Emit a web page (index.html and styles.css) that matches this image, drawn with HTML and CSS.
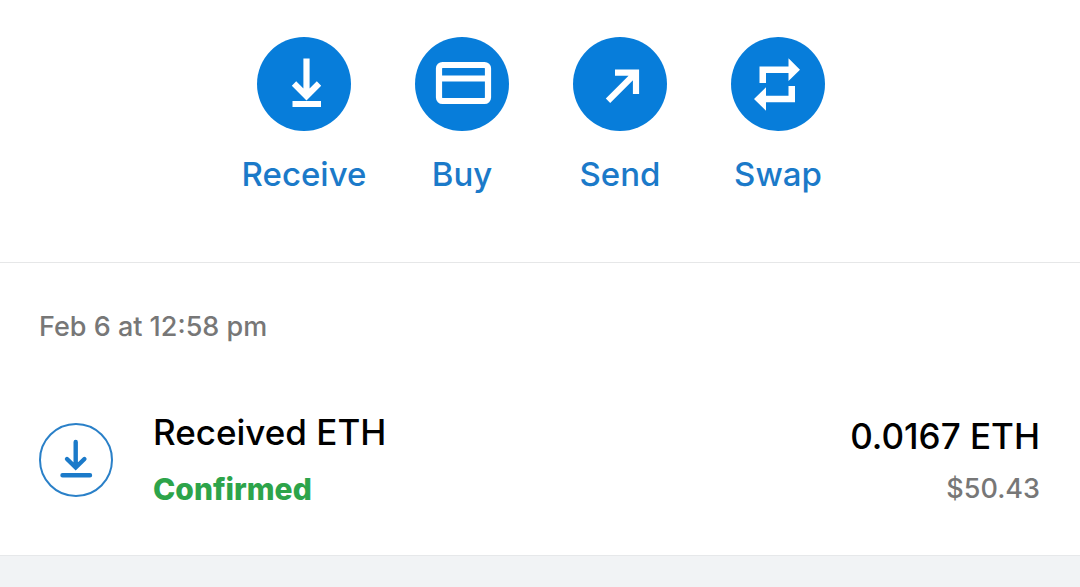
FILE: index.html
```html
<!DOCTYPE html>
<html lang="en">
<head>
    <meta charset="UTF-8">
    <meta name="viewport" content="width=device-width, initial-scale=1.0">
    <title>Wallet</title>
    <link rel="stylesheet" href="styles.css">
</head>
<body>
    <nav class="actions">
        <button type="button" class="action">
            <svg class="action-icon" viewBox="0 0 94 94" aria-hidden="true">
                <circle cx="47" cy="47" r="47" fill="#077dda"/>
                <path d="M49.5 21.5V59M37 46.5L49.5 59L62 46.5M35.5 67H64" fill="none" stroke="#fff" stroke-width="6.2"/>
            </svg>
            <span>Receive</span>
        </button>
        <button type="button" class="action">
            <svg class="action-icon" viewBox="0 0 94 94" aria-hidden="true">
                <circle cx="47" cy="47" r="47" fill="#077dda"/>
                <rect x="24" y="28" width="49" height="36" rx="3.5" fill="none" stroke="#fff" stroke-width="6.2"/>
                <path d="M23 41.5H73" stroke="#fff" stroke-width="6.2"/>
            </svg>
            <span>Buy</span>
        </button>
        <button type="button" class="action">
            <svg class="action-icon" viewBox="0 0 94 94" aria-hidden="true">
                <circle cx="47" cy="47" r="47" fill="#077dda"/>
                <path d="M42 35.7H63V57M63 35.7L35 63.7" fill="none" stroke="#fff" stroke-width="6.2"/>
            </svg>
            <span>Send</span>
        </button>
        <button type="button" class="action">
            <svg class="action-icon" viewBox="0 0 94 94" aria-hidden="true">
                <circle cx="47" cy="47" r="47" fill="#077dda"/>
                <path d="M28.5 46V29.5H57.5V21.3L69 32.7L57.5 44V36H35V46ZM64 49V65.3H35V73.7L23 62L35 50.3V58.7H57.5V49Z" fill="#fff"/>
            </svg>
            <span>Swap</span>
        </button>
    </nav>

    <main class="history">
        <p class="date">Feb 6 at 12:58 pm</p>
        <div class="transaction">
            <svg class="transaction-icon" viewBox="0 0 74 74" aria-hidden="true">
                <circle cx="37" cy="37" r="36" fill="none" stroke="#2a80c8" stroke-width="2"/>
                <path d="M36.7 19V44M28 36L36.7 44.5L45.4 36M23.5 52.3H51" fill="none" stroke="#1b7ac9" stroke-width="4.4" stroke-linecap="round"/>
            </svg>
            <div class="details">
                <h2 class="title">Received ETH</h2>
                <p class="status">Confirmed</p>
            </div>
            <div class="amounts">
                <p class="amount">0.0167 ETH</p>
                <p class="fiat">$50.43</p>
            </div>
        </div>
    </main>
</body>
</html>
```

FILE: styles.css
```css
* {
    box-sizing: border-box;
}
body {
    font-family: Inter, "Liberation Sans", sans-serif;
    margin: 0;
    background-color: #f1f3f5;
    color: #000;
}
h2, p {
    margin: 0;
}
.actions {
    display: flex;
    justify-content: center;
    padding: 37px 20px 68px 22px;
    background-color: #fff;
    border-bottom: 1px solid #e6e7e8;
}
.action {
    display: flex;
    flex-direction: column;
    align-items: center;
    gap: 23px;
    width: 158px;
    padding: 0;
    border: 0;
    background: none;
    color: #1b7ac9;
    font-family: inherit;
    font-size: 33px;
    font-weight: 500;
    line-height: 40px;
    cursor: pointer;
}
.action-icon {
    width: 94px;
    height: 94px;
}
.history {
    padding: 44px 40px 46px 39px;
    background-color: #fff;
    border-bottom: 1px solid #e6e8ea;
}
.date {
    color: #777;
    font-size: 27px;
    font-weight: 500;
    line-height: 40px;
}
.transaction {
    display: flex;
    align-items: center;
    margin-top: 63px;
}
.transaction-icon {
    flex: none;
    width: 74px;
    height: 74px;
}
.details {
    flex: 1;
    margin-left: 40px;
}
.title {
    font-size: 35px;
    font-weight: 500;
    line-height: 44px;
}
.status {
    margin-top: 15px;
    color: #2da44a;
    font-size: 30px;
    font-weight: 800;
    line-height: 40px;
}
.amounts {
    padding-top: 4px;
    text-align: right;
}
.amount {
    font-size: 35px;
    font-weight: 500;
    line-height: 44px;
}
.fiat {
    margin-top: 11px;
    color: #777;
    font-size: 27px;
    font-weight: 500;
    line-height: 40px;
}
```
